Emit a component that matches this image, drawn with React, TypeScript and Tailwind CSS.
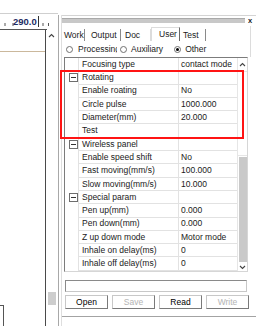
import React from "react";

type Row = { cat?: boolean; name: string; value?: string };

const rows: Row[] = [
  { name: "Focusing type", value: "contact mode" },
  { cat: true, name: "Rotating" },
  { name: "Enable roating", value: "No" },
  { name: "Circle pulse", value: "1000.000" },
  { name: "Diameter(mm)", value: "20.000" },
  { name: "Test", value: "" },
  { cat: true, name: "Wireless panel" },
  { name: "Enable speed shift", value: "No" },
  { name: "Fast moving(mm/s)", value: "100.000" },
  { name: "Slow moving(mm/s)", value: "10.000" },
  { cat: true, name: "Special param" },
  { name: "Pen up(mm)", value: "0.000" },
  { name: "Pen down(mm)", value: "0.000" },
  { name: "Z up down mode", value: "Motor mode" },
  { name: "Inhale on delay(ms)", value: "0" },
  { name: "Inhale off delay(ms)", value: "0" },
];

function Chevron({ down }: { down?: boolean }) {
  return (
    <svg width="7" height="5" viewBox="0 0 7 5">
      <polyline
        points={down ? "1,1 3.5,3.5 6,1" : "1,4 3.5,1.5 6,4"}
        fill="none"
        stroke="#444"
        strokeWidth="1.1"
      />
    </svg>
  );
}

function Radio({ checked }: { checked?: boolean }) {
  return (
    <span className="w-[7px] h-[7px] rounded-full border border-[#707070] bg-white flex items-center justify-center shrink-0">
      {checked && <span className="w-[3px] h-[3px] rounded-full bg-black" />}
    </span>
  );
}

function Btn({ label, disabled }: { label: string; disabled?: boolean }) {
  return (
    <div
      className={
        "w-[43px] h-[14px] flex items-center justify-center border border-t-[#c8c8c8] border-l-[#c8c8c8] border-r-[#7a7a7a] border-b-[#7a7a7a] bg-white " +
        (disabled ? "text-[#b4b4b4]" : "text-black")
      }
    >
      {label}
    </div>
  );
}

export default function App() {
  return (
    <div className="w-[256px] h-[326px] bg-white flex overflow-hidden relative font-['Liberation_Sans',Arial,sans-serif] text-[8.5px] leading-none text-[#1a1a1a]">
      {/* drawing area */}
      <div className="w-[58px] flex flex-col shrink-0">
        <div className="h-[13px]" />
        <div className="h-px bg-[#cfcfcf]" />
        <div className="h-[15px] relative flex items-start pl-[13px] pt-[3px]">
          <svg className="absolute inset-0" width="58" height="15">
            <line x1="5" y1="9" x2="5" y2="12" stroke="#555" />
            <line x1="13" y1="9" x2="13" y2="12" stroke="#555" />
            <line x1="43" y1="9" x2="43" y2="12" stroke="#555" />
            <line x1="48.5" y1="9" x2="48.5" y2="12" stroke="#555" />
            <line x1="38.5" y1="2" x2="38.5" y2="13" stroke="#333" />
          </svg>
          <span className="relative font-bold text-[9.5px] text-[#1d2b63]">290.0</span>
        </div>
        <div className="h-px bg-[#555] w-[47px]" />
        <div className="flex-1 flex">
          <div className="w-[46px] border-r border-[#4a4a4a] flex flex-col">
            <div className="h-[21px]" />
            <div className="h-px bg-[#cbb89c]" />
            <div className="flex-1" />
            <div className="w-[4px] h-[21px] border-t border-r border-[#555]" />
          </div>
          <div className="w-[11px] flex flex-col items-center">
            <div className="mt-[3px]">
              <Chevron />
            </div>
            <div className="flex-1" />
            <div className="w-[8px] h-[13px] bg-[#cdcdcd] mb-[21px]" />
          </div>
        </div>
      </div>

      {/* panel borders */}
      <div className="w-px bg-[#a8a8a8] mt-[15px]" />
      <div className="w-[2px]" />
      <div className="w-px bg-[#dedede] mt-[15px]" />

      {/* property panel */}
      <div className="w-[194px] flex flex-col">
        <div className="h-[15px]" />
        <div className="h-px bg-[#d4d4d4]" />
        <div className="h-[10px] flex items-start pt-[2px]">
          <div className="w-[183px] h-[5px] bg-[#c8c8c8] border-t border-[#a9a9a9]" />
          <span className="ml-[3px] -mt-[1px] font-bold text-[7.5px]">x</span>
        </div>

        {/* tabs */}
        <div className="h-[15px] flex items-end w-[189px] border-r border-[#dcdcdc] whitespace-nowrap">
          <div className="w-[23px] h-[12px] pl-[2px] flex items-center border-r border-[#8a8a8a]">Work</div>
          <div className="w-[36px] h-[12px] pl-[6px] flex items-center border-r border-[#8a8a8a]">Output</div>
          <div className="w-[30px] h-[12px] pl-[4px] flex items-center border-r border-[#dcdcdc]">Doc</div>
          <div className="w-[29px] h-[14px] pl-[7px] flex items-center border-l border-t border-r border-l-[#dcdcdc] border-t-[#dcdcdc] border-r-[#6a6a6a] bg-white">
            User
          </div>
          <div className="w-[26px] h-[12px] pl-[3px] flex items-center border-r border-[#8a8a8a]">Test</div>
        </div>

        {/* radio row */}
        <div className="h-[16px] flex items-center w-[189px] border-r border-[#dcdcdc]">
          <div className="ml-[4px] flex items-center">
            <Radio />
            <span className="ml-[5px] w-[39px] overflow-hidden whitespace-nowrap">Processing</span>
          </div>
          <div className="ml-[3px] flex items-center">
            <Radio />
            <span className="ml-[4px]">Auxiliary</span>
          </div>
          <div className="ml-[11px] flex items-center">
            <Radio checked />
            <span className="ml-[4px]">Other</span>
          </div>
        </div>

        {/* property grid */}
        <div className="flex">
          <div className="w-[2px]" />
          <div className="w-[184px] h-[215px] flex border border-t-[#7c7c7c] border-l-[#7c7c7c] border-r-[#d6d6d6] border-b-[#d6d6d6] bg-white">
            <div className="w-[172px] flex flex-col">
              {rows.map((r, i) => (
                <div key={i} className="h-[13.3px] flex">
                  <div className="w-[13px] flex items-center justify-center">
                    {r.cat && (
                      <span className="w-[9px] h-[9px] border border-[#6e6e6e] flex items-center justify-center ml-[3px]">
                        <span className="w-[5px] h-px bg-[#333]" />
                      </span>
                    )}
                  </div>
                  <div className="w-[100px] border-l border-b border-[#e2e2e2] flex items-center pl-[3px] whitespace-nowrap overflow-hidden">
                    {r.name}
                  </div>
                  <div className="flex-1 border-l border-b border-[#e2e2e2] flex items-center pl-[2px] whitespace-nowrap overflow-hidden">
                    {r.value}
                  </div>
                </div>
              ))}
            </div>
            <div className="flex-1 flex flex-col items-center border-l border-[#e6e6e6]">
              <div className="h-[13px] flex items-center">
                <Chevron />
              </div>
              <div className="w-full h-[85px] border-y border-[#e6e6e6]" />
              <div className="w-[8px] flex-1 bg-[#c9c9c9] my-px" />
              <div className="h-[8px] flex items-center">
                <Chevron down />
              </div>
            </div>
          </div>
        </div>

        {/* text box */}
        <div className="mt-[8px] ml-[3px] w-[182px] h-[12px] border border-t-[#8a8a8a] border-l-[#8a8a8a] border-r-[#c8c8c8] border-b-[#c8c8c8] bg-white" />

        {/* buttons */}
        <div className="mt-[3px] ml-[3px] flex gap-[4px]">
          <Btn label="Open" />
          <Btn label="Save" disabled />
          <Btn label="Read" />
          <Btn label="Write" disabled />
        </div>

        <div className="mt-[7px] h-px bg-[#a3a3a3]" />
        <div className="h-px bg-white" />
      </div>

      {/* annotation */}
      <div className="absolute left-[60px] top-[70px] w-[184px] h-[69px] border-2 border-[#ff1414]" />
    </div>
  );
}
